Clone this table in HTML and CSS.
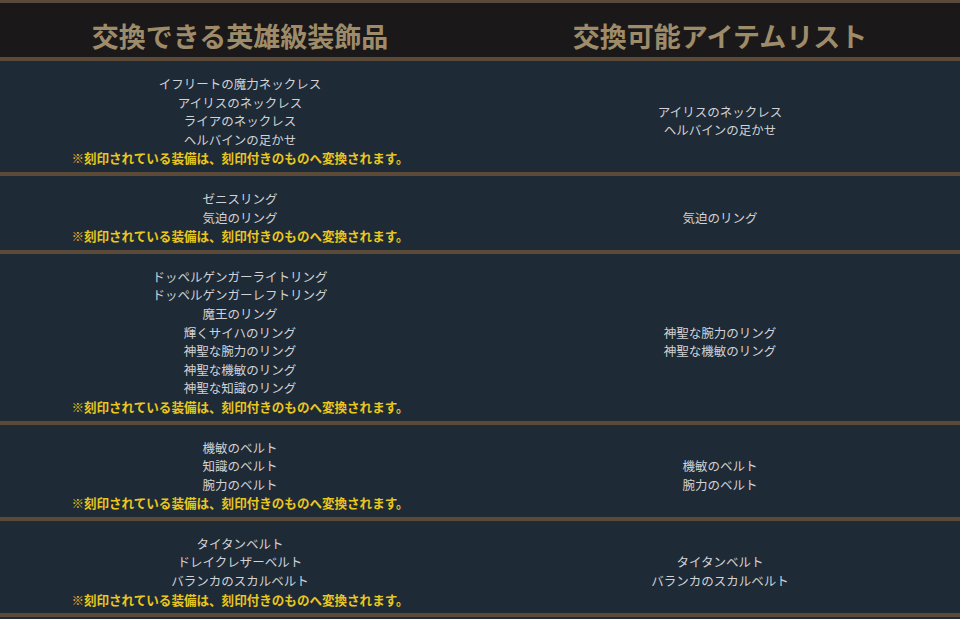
FILE: index.html
```html
<!DOCTYPE html>
<html lang="ja">
<head>
<meta charset="utf-8">
<link rel="stylesheet" href="styles.css">
</head>
<body>
<div class="table">
  <div class="head">
    <div class="th">交換できる英雄級装飾品</div>
    <div class="th">交換可能アイテムリスト</div>
  </div>
  <div class="row">
    <div class="cell">イフリートの魔力ネックレス<br>アイリスのネックレス<br>ライアのネックレス<br>ヘルバインの足かせ<br><span class="note">※刻印されている装備は、刻印付きのものへ変換されます。</span></div>
    <div class="cell">アイリスのネックレス<br>ヘルバインの足かせ</div>
  </div>
  <div class="row">
    <div class="cell">ゼニスリング<br>気迫のリング<br><span class="note">※刻印されている装備は、刻印付きのものへ変換されます。</span></div>
    <div class="cell">気迫のリング</div>
  </div>
  <div class="row">
    <div class="cell">ドッペルゲンガーライトリング<br>ドッペルゲンガーレフトリング<br>魔王のリング<br>輝くサイハのリング<br>神聖な腕力のリング<br>神聖な機敏のリング<br>神聖な知識のリング<br><span class="note">※刻印されている装備は、刻印付きのものへ変換されます。</span></div>
    <div class="cell">神聖な腕力のリング<br>神聖な機敏のリング</div>
  </div>
  <div class="row">
    <div class="cell">機敏のベルト<br>知識のベルト<br>腕力のベルト<br><span class="note">※刻印されている装備は、刻印付きのものへ変換されます。</span></div>
    <div class="cell">機敏のベルト<br>腕力のベルト</div>
  </div>
  <div class="row last">
    <div class="cell">タイタンベルト<br>ドレイクレザーベルト<br>バランカのスカルベルト<br><span class="note">※刻印されている装備は、刻印付きのものへ変換されます。</span></div>
    <div class="cell">タイタンベルト<br>バランカのスカルベルト</div>
  </div>
</div>
</body>
</html>
```
FILE: styles.css
```css
html, body {
  margin: 0;
  padding: 0;
  background: #1f2a37;
}
body {
  font-family: "Noto Sans CJK JP", "Noto Sans", sans-serif;
  width: 960px;
  height: 619px;
  overflow: hidden;
}
.table {
  display: flex;
  flex-direction: column;
}
.head {
  display: grid;
  grid-template-columns: 1fr 1fr;
  background: #1a1818;
  border-top: 3px solid #5a4a3b;
  height: 54px;
}
.th {
  text-align: center;
  color: #9d8b69;
  font-size: 27px;
  font-weight: bold;
  line-height: 27px;
  padding-top: 19px;
}
.row {
  display: grid;
  grid-template-columns: 1fr 1fr;
  border-top: 4px solid #5c4a39;
}
.row.last {
  border-bottom: 4px solid #5c4a39;
}
.cell {
  align-self: center;
  text-align: center;
  color: #d0d2d5;
  font-size: 12.5px;
  line-height: 18.6px;
  padding: 14px 0 4px;
}
.note {
  color: #e8c81c;
  font-weight: bold;
  font-size: 12.55px;
}
```
